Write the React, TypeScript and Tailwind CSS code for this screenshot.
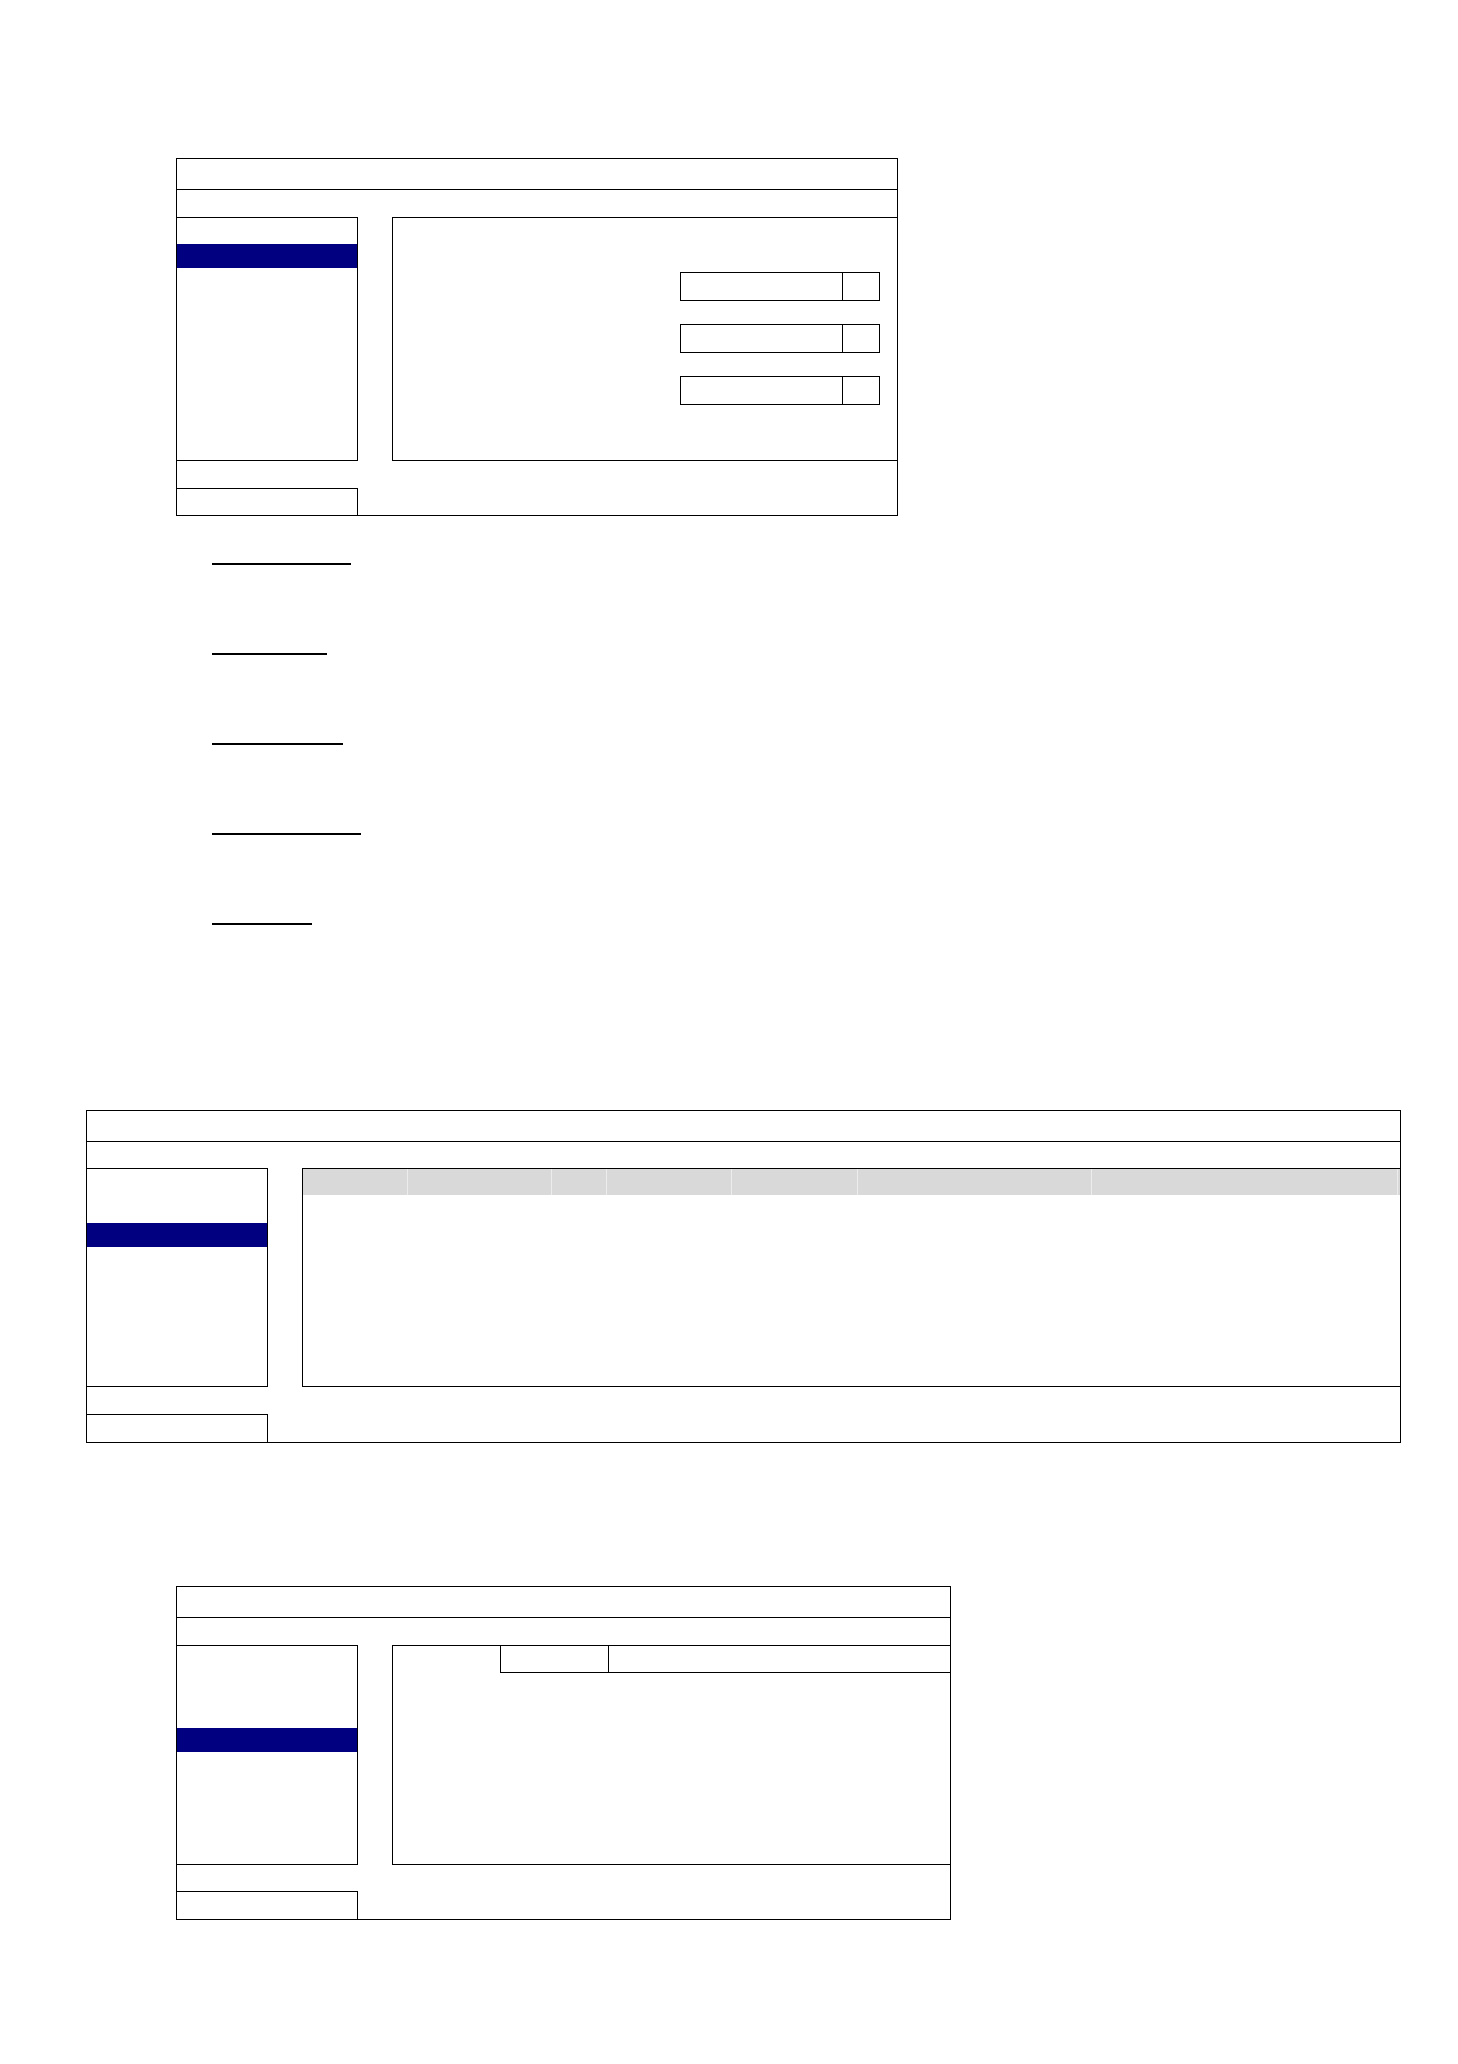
import React from "react";

type WindowProps = {
  width: string;
  row2H: string;
  bodyH: string;
  blueTop: string;
  spacerH: string;
  footH: string;
  children?: React.ReactNode;
};

function MenuWindow({ width, row2H, bodyH, blueTop, spacerH, footH, children }: WindowProps) {
  return (
    <div className={`${width} box-border flex flex-col border border-black bg-white`}>
      <div className="h-[31px] border-b border-black" />
      <div className={row2H} />
      <div className={`flex ${bodyH}`}>
        <div className="w-[181px] shrink-0 border-t border-r border-b border-black">
          <div className={`${blueTop} h-[24px] bg-[#000080]`} />
        </div>
        <div className="w-[34px] shrink-0" />
        <div className="flex-1 border-t border-l border-b border-black">{children}</div>
      </div>
      <div className={spacerH} />
      <div className={`${footH} w-[181px] border-t border-r border-black`} />
    </div>
  );
}

function SelectField() {
  return (
    <div className="flex h-[29px] w-[200px] border border-black">
      <div className="w-[162px] border-r border-black" />
      <div className="flex-1" />
    </div>
  );
}

const columns = ["w-[105px]", "w-[144px]", "w-[55px]", "w-[125px]", "w-[126px]", "w-[234px]", "w-[306px]"];

export default function App() {
  return (
    <div className="min-h-[2064px] w-full bg-white pt-[158px] font-['Liberation_Sans',sans-serif]">
      <div className="ml-[176px]">
        <MenuWindow width="w-[722px]" row2H="h-[27px]" bodyH="h-[244px]" blueTop="mt-[26px]" spacerH="h-[27px]" footH="h-[27px]">
          <div className="flex flex-col gap-[23px] pl-[287px] pt-[54px]">
            <SelectField />
            <SelectField />
            <SelectField />
          </div>
        </MenuWindow>
      </div>

      <div className="ml-[212px] mt-[47px] flex flex-col gap-[88px]">
        <div className="h-[2px] w-[139px] bg-black" />
        <div className="h-[2px] w-[115px] bg-black" />
        <div className="h-[2px] w-[131px] bg-black" />
        <div className="h-[2px] w-[149px] bg-black" />
        <div className="h-[2px] w-[100px] bg-black" />
      </div>

      <div className="ml-[86px] mt-[185px]">
        <MenuWindow width="w-[1315px]" row2H="h-[26px]" bodyH="h-[219px]" blueTop="mt-[54px]" spacerH="h-[27px]" footH="h-[28px]">
          <div className="flex h-[26px] bg-[#d9d9d9]">
            {columns.map((c, i) => (
              <div key={i} className={`${c} shrink-0 border-r border-[#ececec]`} />
            ))}
            <div className="flex-1" />
          </div>
        </MenuWindow>
      </div>

      <div className="ml-[176px] mt-[143px]">
        <MenuWindow width="w-[775px]" row2H="h-[27px]" bodyH="h-[220px]" blueTop="mt-[82px]" spacerH="h-[26px]" footH="h-[28px]">
          <div className="flex h-[27px]">
            <div className="w-[107px] shrink-0" />
            <div className="w-[109px] shrink-0 border-l border-r border-b border-black" />
            <div className="flex-1 border-b border-black" />
          </div>
        </MenuWindow>
      </div>
    </div>
  );
}
